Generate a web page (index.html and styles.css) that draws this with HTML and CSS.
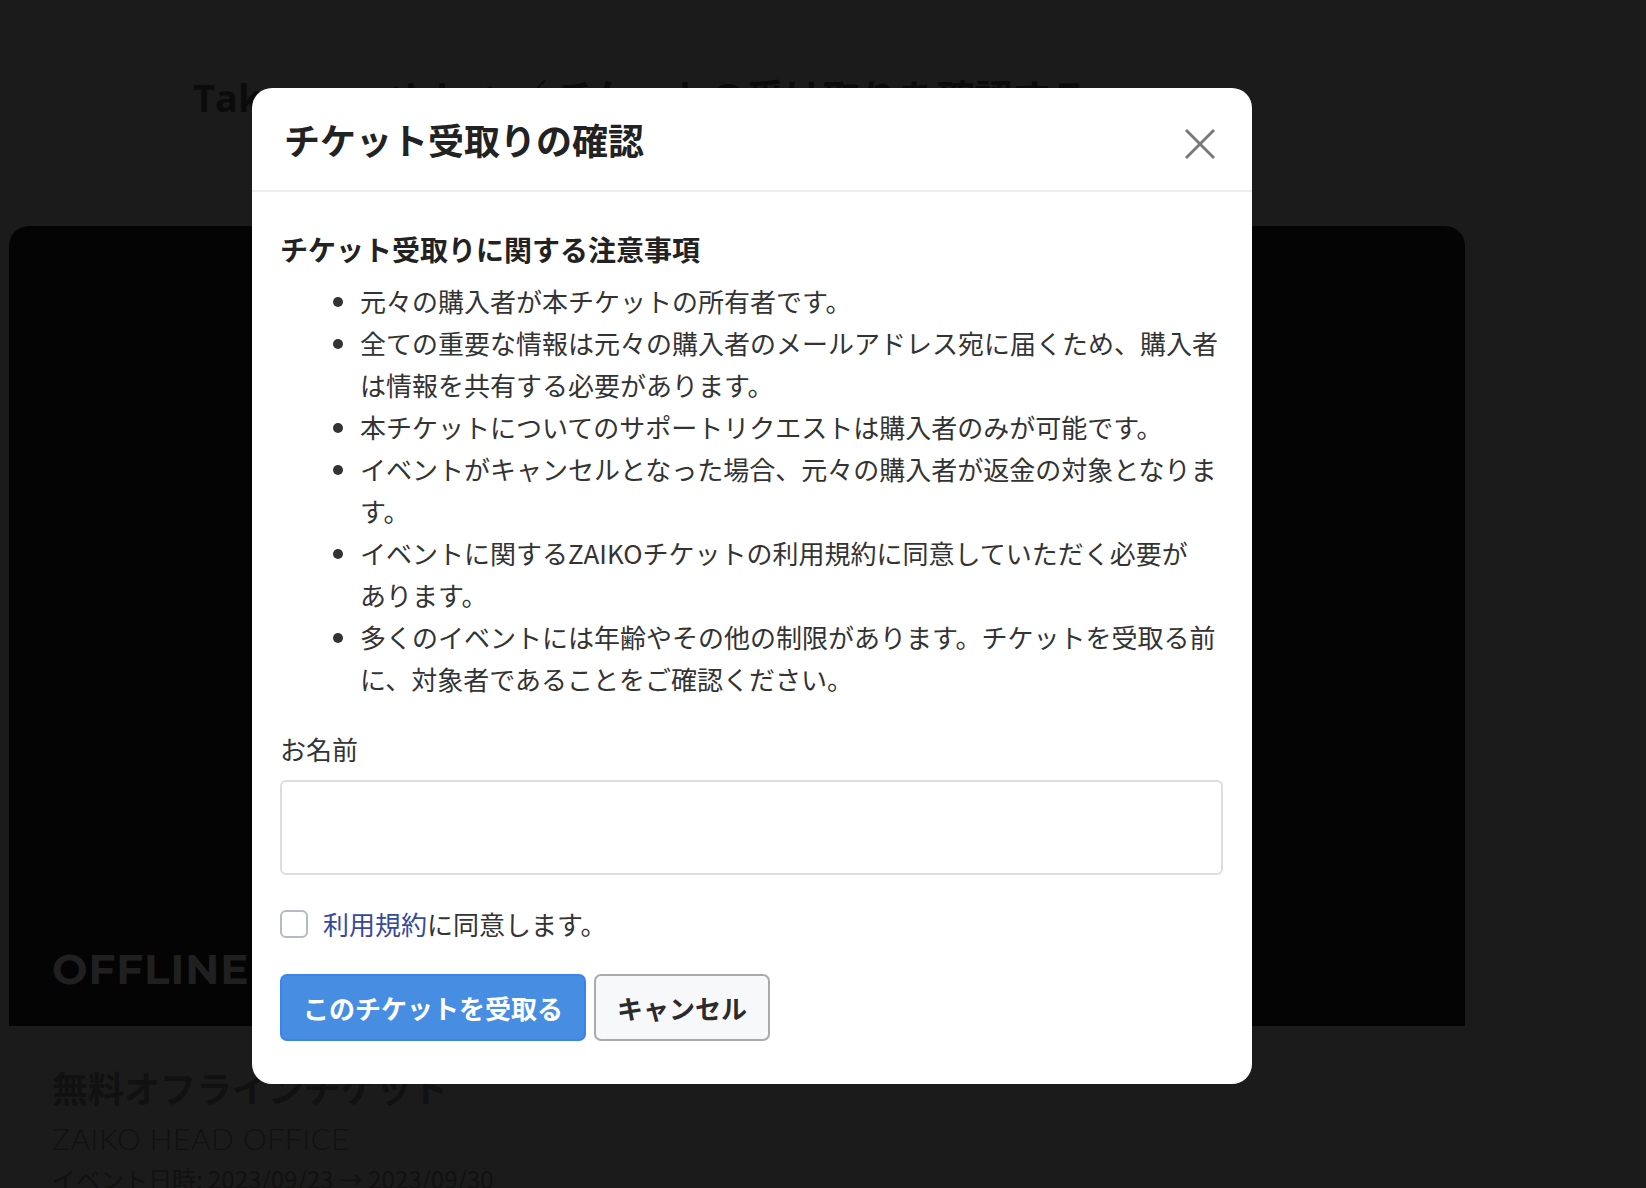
FILE: index.html
```html
<!DOCTYPE html>
<html lang="ja">
<head>
<meta charset="utf-8">
<title>チケット受取りの確認</title>
<link rel="stylesheet" href="styles.css">
</head>
<body>
<div class="page">
  <h1 class="page-title">Take over ticket ／ チケットの受け取りを確認する</h1>
  <div class="card">
    <div class="card-label">OFFLINE</div>
  </div>
  <div class="card-info">
    <div class="info-title">無料オフラインチケット</div>
    <div class="info-venue">ZAIKO HEAD OFFICE</div>
    <div class="info-date">イベント日時: 2023/09/23 → 2023/09/30</div>
  </div>
</div>

<div class="modal">
  <div class="modal-header">
    <h2 class="modal-title">チケット受取りの確認</h2>
    <button class="close-btn" type="button" aria-label="close">
      <svg width="32" height="32" viewBox="0 0 32 32"><path d="M2 2 L30 30 M30 2 L2 30" stroke="#7a7a7a" stroke-width="3" fill="none"/></svg>
    </button>
  </div>
  <div class="modal-body">
    <h3 class="section-title">チケット受取りに関する注意事項</h3>
    <ul class="notes">
      <li>元々の購入者が本チケットの所有者です。</li>
      <li>全ての重要な情報は元々の購入者のメールアドレス宛に届くため、購入者は情報を共有する必要があります。</li>
      <li>本チケットについてのサポートリクエストは購入者のみが可能です。</li>
      <li>イベントがキャンセルとなった場合、元々の購入者が返金の対象となります。</li>
      <li>イベントに関するZAIKOチケットの利用規約に同意していただく必要が<span class="nowrap">あります。</span></li>
      <li>多くのイベントには年齢やその他の制限があります。チケットを受取る前に、対象者であることをご確認ください。</li>
    </ul>
    <label class="field-label" for="name">お名前</label>
    <input class="text-input" id="name" type="text">
    <label class="agree">
      <input class="check" type="checkbox">
      <span><a class="link" href="#">利用規約</a>に同意します。</span>
    </label>
    <div class="actions">
      <button class="btn btn-primary" type="button">このチケットを受取る</button>
      <button class="btn btn-secondary" type="button">キャンセル</button>
    </div>
  </div>
</div>
</body>
</html>
```

FILE: styles.css
```css
* { box-sizing: border-box; }
html, body {
  margin: 0;
  padding: 0;
}
body {
  width: 1646px;
  height: 1188px;
  overflow: hidden;
  background: #1b1b1b;
  font-family: "Noto Sans CJK JP", "Noto Sans", sans-serif;
  position: relative;
}

/* background page */
.page {
  padding-left: 9px;
}
.page-title {
  margin: 0;
  padding: 74px 0 0 184px;
  font-family: "Open Sans", "Noto Sans CJK JP", sans-serif;
  font-weight: 700;
  font-size: 38px;
  line-height: 46px;
  color: #0b0b0b;
  white-space: nowrap;
}
.card {
  margin-top: 106px;
  width: 1456px;
  height: 800px;
  background: #040404;
  border-radius: 20px 20px 0 0;
  display: flex;
  flex-direction: column;
  justify-content: flex-end;
  padding: 0 0 34px 43px;
}
.card-label {
  font-family: "Montserrat", "Lato", "Open Sans", sans-serif;
  font-weight: 700;
  font-size: 42px;
  line-height: 46px;
  color: #202020;
  letter-spacing: 1px;
}
.card-info {
  padding: 37px 0 0 43px;
  color: #111;
}
.info-title {
  font-weight: 700;
  font-size: 36px;
  line-height: 48px;
}
.info-venue {
  font-family: "Lato", "Open Sans", sans-serif;
  font-weight: 300;
  font-size: 30px;
  line-height: 44px;
  margin-top: 5px;
  letter-spacing: 0.5px;
}
.info-date {
  font-size: 24px;
  line-height: 32px;
  margin-top: 3px;
  white-space: nowrap;
}

/* modal */
.modal {
  position: absolute;
  left: 252px;
  top: 88px;
  width: 1000px;
  background: #fff;
  border-radius: 20px;
  overflow: hidden;
}
.modal-header {
  height: 104px;
  border-bottom: 2px solid #eeeeee;
  display: flex;
  align-items: center;
  justify-content: space-between;
  padding: 0 36px 0 32px;
}
.modal-title {
  margin: 0;
  font-size: 36px;
  line-height: 48px;
  font-weight: 700;
  color: #222;
}
.close-btn {
  border: 0;
  background: none;
  padding: 0;
  margin-top: 10px;
  width: 32px;
  height: 32px;
  display: flex;
  cursor: pointer;
}
.modal-body {
  padding: 36px 29px 43px 28px;
  color: #333;
}
.section-title {
  margin: 0;
  font-size: 28px;
  line-height: 42px;
  font-weight: 700;
  color: #222;
}
.notes {
  margin: 10px 0 28px;
  padding-left: 80px;
  font-size: 26px;
  line-height: 42px;
}
.nowrap {
  white-space: nowrap;
}
.field-label {
  display: block;
  font-size: 26px;
  line-height: 42px;
  margin-bottom: 10px;
}
.text-input {
  display: block;
  width: 100%;
  height: 95px;
  border: 2px solid #dddddd;
  border-radius: 6px;
  font-size: 26px;
  padding: 0 20px;
}
.agree {
  margin-top: 28px;
  display: flex;
  align-items: center;
  gap: 15px;
  font-size: 26px;
  line-height: 42px;
}
.check {
  appearance: none;
  -webkit-appearance: none;
  margin: 0;
  width: 28px;
  height: 28px;
  border: 2px solid #b5bac3;
  border-radius: 6px;
  background: #fff;
}
.link {
  color: #37499c;
  text-decoration: none;
}
.actions {
  margin-top: 29px;
  display: flex;
  gap: 8px;
}
.btn {
  font-family: "Noto Sans CJK JP", sans-serif;
  font-weight: 700;
  font-size: 26px;
  line-height: 39px;
  padding: 12px 21px;
  border-radius: 7px;
  white-space: nowrap;
  cursor: pointer;
}
.btn-primary {
  background: #478ee3;
  border: 2px solid #3a82f2;
  color: #fff;
}
.btn-secondary {
  background: #f7f8fa;
  border: 2px solid #aaaaaa;
  color: #2b2b2b;
}
```
